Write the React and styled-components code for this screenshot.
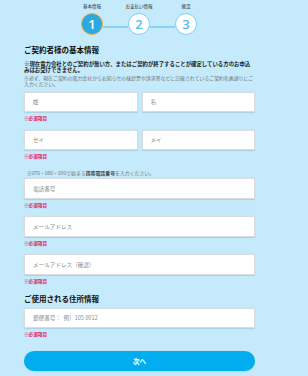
import { Fragment } from 'react';
import styled, { createGlobalStyle } from 'styled-components';

const GlobalStyle = createGlobalStyle`
  html, body {
    margin: 0;
    padding: 0;
    background: #c4eafc;
  }
  body {
    font-family: "Noto Sans CJK JP", "Noto Sans", sans-serif;
    color: #222;
  }
`;

const Page = styled.div`
  width: 308px;
  min-height: 376px;
  background: #c4eafc;
  padding: 3px 0 0 24px;
  box-sizing: border-box;
`;

const Form = styled.div`
  width: 231px;
  display: flex;
  flex-direction: column;
`;

const Steps = styled.div`
  display: flex;
  justify-content: center;
  align-items: flex-start;
  margin-right: 1px;
`;

const Step = styled.div`
  width: 22px;
  display: flex;
  flex-direction: column;
  align-items: center;
  gap: 4px;
`;

const StepLabel = styled.span`
  font-size: 4.5px;
  line-height: 6px;
  white-space: nowrap;
  color: #333;
`;

const Circle = styled.div`
  width: 22px;
  height: 22px;
  box-sizing: border-box;
  border-radius: 50%;
  display: flex;
  align-items: center;
  justify-content: center;
  font-family: "Open Sans", "Noto Sans", sans-serif;
  font-size: 13px;
  font-weight: 600;
  background: ${p => (p.$active ? '#29abe2' : '#ffffff')};
  color: ${p => (p.$active ? '#ffffff' : '#4dbdec')};
  border: ${p => (p.$active ? '1.5px solid #f2a93b' : '1px solid #7ccff3')};
`;

const Line = styled.div`
  width: 25px;
  height: 1.5px;
  background: #8ad4f4;
  margin-top: 23px;
`;

const SectionTitle = styled.h2`
  margin: ${p => p.$top}px 0 0;
  font-size: 7.5px;
  line-height: 10px;
  font-weight: 700;
  color: #111;
`;

const Notice = styled.p`
  margin: 6px 0 0;
  font-size: 5.4px;
  line-height: 6px;
  font-weight: 700;
  color: #222;
`;

const Note = styled.p`
  margin: ${p => p.$top || 2}px 0 0 ${p => p.$indent || 0}px;
  font-size: 4.9px;
  line-height: 6px;
  color: #777;

  b {
    color: #444;
  }
`;

const Field = styled.div`
  display: flex;
  flex-direction: column;
  margin-top: ${p => p.$top}px;
`;

const Row = styled.div`
  display: flex;
  gap: 4px;
`;

const Input = styled.input`
  display: block;
  width: 100%;
  min-width: 0;
  height: ${p => p.$h || 20}px;
  box-sizing: border-box;
  border: 1px solid #d5dde2;
  border-radius: 1px;
  background: #fff;
  box-shadow: 0 0.5px 1px rgba(0, 0, 0, 0.12);
  padding: 0 0 0 8px;
  font-family: "Noto Sans CJK JP", "Noto Sans", sans-serif;
  font-size: 5.6px;
  outline: none;

  ${Row} > & {
    flex: 1;
    width: auto;
  }

  &::placeholder {
    color: #8c8c8c;
  }
`;

const Required = styled.span`
  margin-top: 3px;
  font-size: 4.6px;
  line-height: 6px;
  color: #e2245a;
  font-weight: 700;
`;

const NextButton = styled.button`
  margin-top: 14px;
  height: 20px;
  border: none;
  border-radius: 10px;
  background: #00aeef;
  box-shadow: 0 0.5px 1px rgba(0, 80, 130, 0.2);
  color: #fff;
  font-family: "Noto Sans CJK JP", "Noto Sans", sans-serif;
  font-size: 6.5px;
  font-weight: 700;
  cursor: pointer;
`;

const steps = ['基本情報', 'お支払い情報', '確認'];

export default function App() {
  return (
    <>
      <GlobalStyle />
      <Page>
        <Form>
          <Steps>
            {steps.map((label, i) => (
              <Fragment key={label}>
                {i > 0 && <Line />}
                <Step>
                  <StepLabel>{label}</StepLabel>
                  <Circle $active={i === 0}>{i + 1}</Circle>
                </Step>
              </Fragment>
            ))}
          </Steps>

          <SectionTitle $top={10}>ご契約者様の基本情報</SectionTitle>
          <Notice>
            ※現在電力会社とのご契約が無い方、またはご契約が終了することが確定している方のお申込みはお受けできません。
          </Notice>
          <Note>
            ※必ず、現在ご契約の電力会社からお知らせの検針票や請求書などに記載されているご契約名義通りにご入力ください。
          </Note>

          <Field $top={5}>
            <Row>
              <Input placeholder="姓" />
              <Input placeholder="名" />
            </Row>
            <Required>※必須項目</Required>
          </Field>

          <Field $top={9}>
            <Row>
              <Input placeholder="セイ" />
              <Input placeholder="メイ" />
            </Row>
            <Required>※必須項目</Required>
          </Field>

          <Note $top={11} $indent={3}>
            ※070・080・090で始まる<b>携帯電話番号</b>を入力ください。
          </Note>
          <Field $top={2}>
            <Input $h={21} placeholder="電話番号" />
            <Required>※必須項目</Required>
          </Field>

          <Field $top={8}>
            <Input $h={21} placeholder="メールアドレス" />
            <Required>※必須項目</Required>
          </Field>

          <Field $top={8}>
            <Input $h={21} placeholder="メールアドレス（確認）" />
            <Required>※必須項目</Required>
          </Field>

          <SectionTitle $top={10}>ご使用される住所情報</SectionTitle>
          <Field $top={4}>
            <Input placeholder="郵便番号：  例）105 0012" />
            <Required>※必須項目</Required>
          </Field>

          <NextButton>次へ</NextButton>
        </Form>
      </Page>
    </>
  );
}
